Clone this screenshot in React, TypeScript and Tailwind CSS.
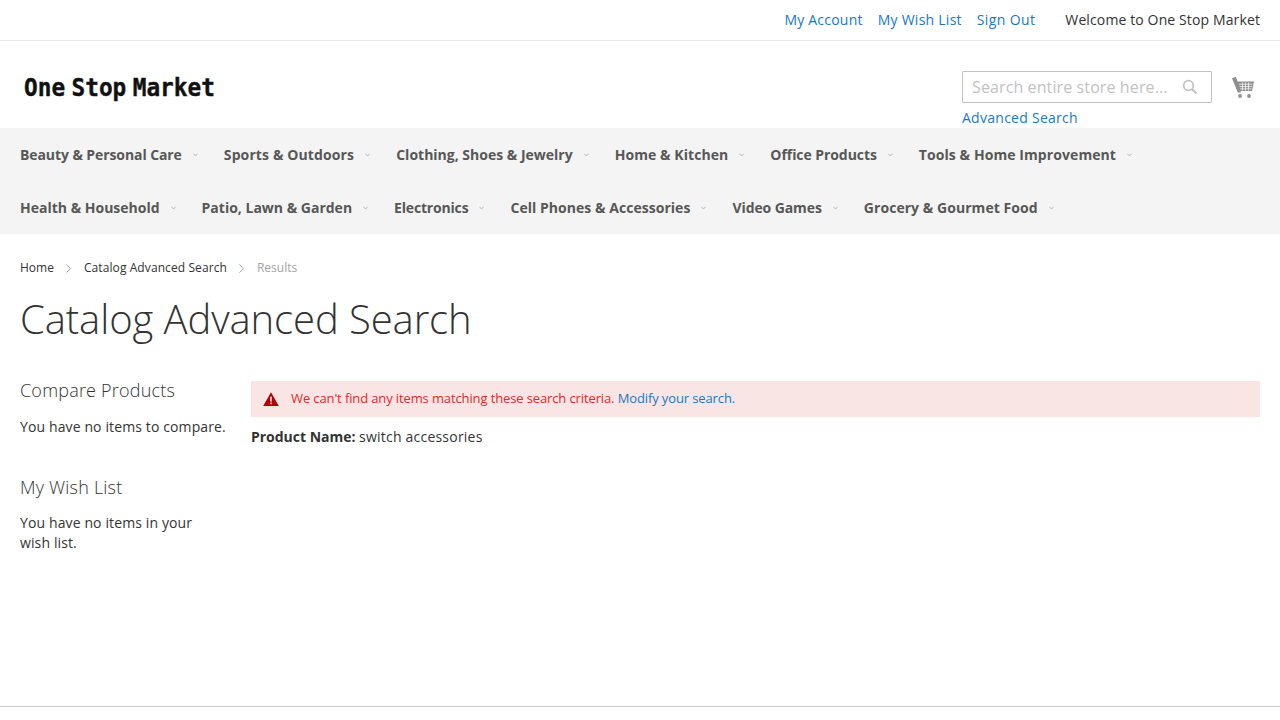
const row1 = [
  { label: "Beauty & Personal Care", cls: "tracking-[-0.09px]" },
  { label: "Sports & Outdoors", cls: "tracking-[0.12px]" },
  { label: "Clothing, Shoes & Jewelry", cls: "" },
  { label: "Home & Kitchen", cls: "tracking-[0.07px]" },
  { label: "Office Products", cls: "tracking-[-0.07px]" },
  { label: "Tools & Home Improvement", cls: "tracking-[0.08px]" },
];
const row2 = [
  { label: "Health & Household", cls: "" },
  { label: "Patio, Lawn & Garden", cls: "" },
  { label: "Electronics", cls: "tracking-[-0.18px]" },
  { label: "Cell Phones & Accessories", cls: "tracking-[0.04px]" },
  { label: "Video Games", cls: "tracking-[-0.09px]" },
  { label: "Grocery & Gourmet Food", cls: "tracking-[0.05px]" },
];

function NavRow({ items }: { items: { label: string; cls: string }[] }) {
  return (
    <div className="flex h-[53px] items-center pl-5">
      {items.map(({ label, cls }) => (
        <a key={label} className={`mr-[42px] flex items-center text-sm font-bold text-[#575757] relative whitespace-nowrap ${cls}`}>
          {label}
          <svg className="absolute right-[-16px] top-[8px]" width="5" height="4" viewBox="0 0 5 4">
            <path d="M0.5 0.8 L2.5 3 L4.5 0.8" fill="none" stroke="#b5b5b5" strokeWidth="1" />
          </svg>
        </a>
      ))}
    </div>
  );
}

function Crumb() {
  return (
    <svg className="ml-[12px] mr-[13px]" width="5" height="9" viewBox="0 0 5 9">
      <path d="M0.5 0.5 L4.5 4.5 L0.5 8.5" fill="none" stroke="#a3a3a3" strokeWidth="1" />
    </svg>
  );
}

export default function App() {
  return (
    <div className="min-h-[720px] bg-white text-sm text-[#333] font-['Open_Sans',sans-serif]">
      {/* top links */}
      <div className="flex h-[41px] items-center justify-end border-b border-[#e8e8e8] pr-5">
        <a className="text-[#1979c3] tracking-[0.22px]">My Account</a>
        <a className="ml-[15px] text-[#1979c3] tracking-[0.25px]">My Wish List</a>
        <a className="ml-[15px] text-[#1979c3] tracking-[0.38px]">Sign Out</a>
        <span className="ml-[30px] tracking-[0.12px]">Welcome to One Stop Market</span>
      </div>

      {/* header */}
      <div className="flex h-[87px] justify-between pl-[24px] pr-[26px]">
        <div className="mt-[32px] h-[30px] origin-left scale-x-[0.91] text-[25px] leading-[30px] font-bold text-[#111] font-['DejaVu_Sans_Mono',monospace] [word-spacing:-8px] [-webkit-text-stroke:0.4px_#111] whitespace-nowrap">
          One Stop Market
        </div>
        <div className="flex">
          <div className="mt-[30px] w-[250px]">
            <div className="flex h-[32px] items-center justify-between rounded-[1px] border border-[#c2c2c2] pl-[9px] pr-[13px]">
              <span className="text-base tracking-[0.11px] text-[#c2c2c2] whitespace-nowrap">Search entire store here...</span>
              <svg width="16" height="16" viewBox="0 0 16 16" fill="none" stroke="#c2c2c2" strokeWidth="1.7">
                <circle cx="6.5" cy="6.5" r="4.8" />
                <path d="M10 10 L14.5 14.5" strokeWidth="2.2" />
              </svg>
            </div>
            <a className="mt-[5px] block leading-[20px] tracking-[0.27px] text-[#1979c3]">Advanced Search</a>
          </div>
          <svg className="ml-[20px] mt-[35px]" width="22" height="23" viewBox="0 0 22 23" fill="#8f8f8f">
            <path d="M0 2.2 L3.8 0.8 L5.6 5.6 H22 L20 15 H8.6 L9 16.4 H5.8 Z M5.2 3.8 L3.5 4.2 L0.8 3.2 Z" />
            <circle cx="8" cy="20" r="1.9" />
            <circle cx="17" cy="20" r="1.9" />
            <path d="M7 8.2 H20.4 M7.6 10.6 H20 M8 12.9 H19.6 M10.5 6.5 V14.5 M13.5 6.5 V14.5 M16.5 6.5 V14.5" stroke="#fff" strokeWidth="0.7" />
          </svg>
        </div>
      </div>

      {/* nav */}
      <nav className="bg-[#f4f4f4]">
        <NavRow items={row1} />
        <NavRow items={row2} />
      </nav>

      {/* breadcrumbs */}
      <div className="flex items-center pl-5 pt-[24px] text-xs leading-[20px]">
        <a>Home</a>
        <Crumb />
        <a className="tracking-[0.09px]">Catalog Advanced Search</a>
        <Crumb />
        <span className="text-[#a3a3a3]">Results</span>
      </div>

      <h1 className="mt-[16px] pl-5 text-[40px] leading-[50px] font-light tracking-[-0.09px] text-[#333]">Catalog Advanced Search</h1>

      <div className="flex gap-[25px] px-5 pt-[35px]">
        {/* sidebar */}
        <aside className="w-[206px] shrink-0 leading-[20px] tracking-[0.12px]">
          <h2 className="text-lg leading-[23px] font-light tracking-[0.2px]">Compare Products</h2>
          <p className="mt-[15px] whitespace-nowrap">You have no items to compare.</p>
          <h2 className="mt-[39px] text-lg leading-[23px] font-light tracking-[0.2px]">My Wish List</h2>
          <p className="mt-[14px] max-w-[190px]">You have no items in your wish list.</p>
        </aside>

        {/* main */}
        <main className="flex-1 pt-[2px]">
          <div className="flex h-[36px] items-center bg-[#fae5e5] pl-3 text-[13px] tracking-[-0.12px] text-[#e02b27]">
            <svg className="mr-3" width="16" height="14" viewBox="0 0 16 14">
              <path d="M8 0.3 L15.8 14 H0.2 Z" fill="#b30000" />
              <rect x="7.2" y="4.6" width="1.6" height="5" fill="#fae5e5" />
              <rect x="7.2" y="10.6" width="1.6" height="1.6" fill="#fae5e5" />
            </svg>
            <span className="mb-[2px]">
              We can't find any items matching these search criteria. <a className="text-[#1979c3]">Modify your search</a>
              <span className="text-[#1979c3]">.</span>
            </span>
          </div>
          <p className="mt-[10px] leading-[20px]">
            <b className="tracking-[-0.02px]">Product Name:</b> <span className="tracking-[0.22px]">switch accessories</span>
          </p>
        </main>
      </div>

      {/* footer line */}
      <div className="mt-[153px] border-t border-[#ccc]" />
    </div>
  );
}
